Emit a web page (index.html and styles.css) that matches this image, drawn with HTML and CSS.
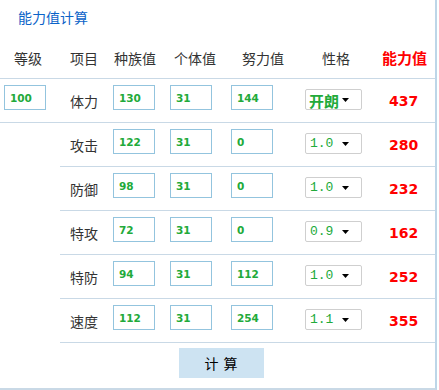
FILE: index.html
```html
<!DOCTYPE html>
<html lang="zh-CN">
<head>
<meta charset="UTF-8">
<meta name="viewport" content="width=device-width, initial-scale=1.0">
<title>能力值计算</title>
<link rel="stylesheet" href="styles.css">
</head>
<body>

<div class="panel">
  <div class="title">能力值计算</div>

  <div class="stats">
    <div class="cell head c1">等级</div>
    <div class="cell head c2">项目</div>
    <div class="cell head c3">种族值</div>
    <div class="cell head c4">个体值</div>
    <div class="cell head c5">努力值</div>
    <div class="cell head c6">性格</div>
    <div class="cell head c7 total">能力值</div>

    <div class="cell c1"><input type="text" class="num" value="100"></div>
    <div class="cell c2">体力</div>
    <div class="cell c3"><input type="text" class="num" value="130"></div>
    <div class="cell c4"><input type="text" class="num" value="31"></div>
    <div class="cell c5"><input type="text" class="num" value="144"></div>
    <div class="cell c6">
      <select class="nature nature-name"><option>开朗</option><option>固执</option><option>胆小</option></select>
    </div>
    <div class="cell c7 result">437</div>

    <div class="cell blank"></div>
    <div class="cell c2">攻击</div>
    <div class="cell c3"><input type="text" class="num" value="122"></div>
    <div class="cell c4"><input type="text" class="num" value="31"></div>
    <div class="cell c5"><input type="text" class="num" value="0"></div>
    <div class="cell c6">
      <select class="nature"><option>1.0</option><option>1.1</option><option>0.9</option></select>
    </div>
    <div class="cell c7 result">280</div>

    <div class="cell blank"></div>
    <div class="cell c2">防御</div>
    <div class="cell c3"><input type="text" class="num" value="98"></div>
    <div class="cell c4"><input type="text" class="num" value="31"></div>
    <div class="cell c5"><input type="text" class="num" value="0"></div>
    <div class="cell c6">
      <select class="nature"><option>1.0</option><option>1.1</option><option>0.9</option></select>
    </div>
    <div class="cell c7 result">232</div>

    <div class="cell blank"></div>
    <div class="cell c2">特攻</div>
    <div class="cell c3"><input type="text" class="num" value="72"></div>
    <div class="cell c4"><input type="text" class="num" value="31"></div>
    <div class="cell c5"><input type="text" class="num" value="0"></div>
    <div class="cell c6">
      <select class="nature"><option>0.9</option><option>1.0</option><option>1.1</option></select>
    </div>
    <div class="cell c7 result">162</div>

    <div class="cell blank"></div>
    <div class="cell c2">特防</div>
    <div class="cell c3"><input type="text" class="num" value="94"></div>
    <div class="cell c4"><input type="text" class="num" value="31"></div>
    <div class="cell c5"><input type="text" class="num" value="112"></div>
    <div class="cell c6">
      <select class="nature"><option>1.0</option><option>1.1</option><option>0.9</option></select>
    </div>
    <div class="cell c7 result">252</div>

    <div class="cell blank"></div>
    <div class="cell c2">速度</div>
    <div class="cell c3"><input type="text" class="num" value="112"></div>
    <div class="cell c4"><input type="text" class="num" value="31"></div>
    <div class="cell c5"><input type="text" class="num" value="254"></div>
    <div class="cell c6">
      <select class="nature"><option>1.1</option><option>1.0</option><option>0.9</option></select>
    </div>
    <div class="cell c7 result">355</div>
  </div>

  <div class="actions">
    <button type="button">计算</button>
  </div>
</div>

</body>
</html>
```

FILE: styles.css
```css
body {
  margin: 0;
  font-family: "Noto Sans CJK SC", "DejaVu Sans", sans-serif;
  color: #333;
  background: #fff;
}
.panel {
  width: 435px;
  border-right: 2px solid #bdd6e8;
  border-bottom: 2px solid #c9d9e6;
}
.title {
  height: 34px;
  line-height: 34px;
  padding-left: 18px;
  font-size: 14px;
  color: #0b63c8;
}
.stats {
  display: grid;
  grid-template-columns: 60px 50px 57px 60px 72px 76px 60px;
}
.cell {
  display: flex;
  align-items: center;
  box-sizing: border-box;
  height: 44px;
  border-bottom: 1px solid #c9d9e6;
  font-size: 14px;
}
.cell.blank {
  border-bottom: none;
}
.head {
  height: 45px;
  padding-top: 3px;
}
.total {
  color: #ff0000;
  font-weight: bold;
  font-size: 15px;
}

/* column offsets */
.c1 { padding-left: 4px; }
.c2 { padding-left: 10px; }
.c3 { padding-left: 3px; }
.c4 { padding-left: 3px; }
.c5 { padding-left: 4px; }
.c6 { padding-left: 6px; }
.c7 { padding-left: 14px; }
.head.c1 { padding-left: 14px; }
.head.c3 { padding-left: 4px; }
.head.c4 { padding-left: 7px; }
.head.c5 { padding-left: 15px; }
.head.c6 { padding-left: 23px; }
.head.c7 { padding-left: 7px; }

.num {
  align-self: flex-start;
  margin: 6px 0 0;
  box-sizing: border-box;
  width: 42px;
  height: 25px;
  padding: 0 5px;
  border: 1px solid #93c4de;
  font-family: "DejaVu Sans", sans-serif;
  font-weight: bold;
  font-size: 10.5px;
  color: #22aa3a;
  outline: none;
}
.nature {
  align-self: flex-start;
  margin: 10px 0 0;
  box-sizing: border-box;
  width: 57px;
  height: 21px;
  padding: 0 0 0 4px;
  border: 1px solid #cfcfcf;
  border-radius: 2px;
  -webkit-appearance: none;
  appearance: none;
  background: #fff url("data:image/svg+xml,%3Csvg xmlns='http://www.w3.org/2000/svg' width='7' height='4'%3E%3Cpath d='M0 0h7L3.5 4z'/%3E%3C/svg%3E") no-repeat right 12px center;
  font-family: "Liberation Mono", monospace;
  font-size: 13px;
  color: #22aa3a;
}
.nature-name {
  font-family: "Noto Sans CJK SC", sans-serif;
  font-size: 15px;
  font-weight: bold;
  padding-left: 3px;
}
.result {
  font-family: "DejaVu Sans", sans-serif;
  font-weight: bold;
  font-size: 14px;
  color: #ff0000;
}
.actions {
  display: flex;
  justify-content: center;
  padding: 5px 0 10px 7px;
}
button {
  width: 85px;
  height: 30px;
  padding: 0 0 0 5px;
  border: none;
  background-color: #cde3f2;
  font-family: "Noto Sans CJK SC", sans-serif;
  font-size: 14px;
  letter-spacing: 5px;
  color: #000;
  cursor: pointer;
}
```
